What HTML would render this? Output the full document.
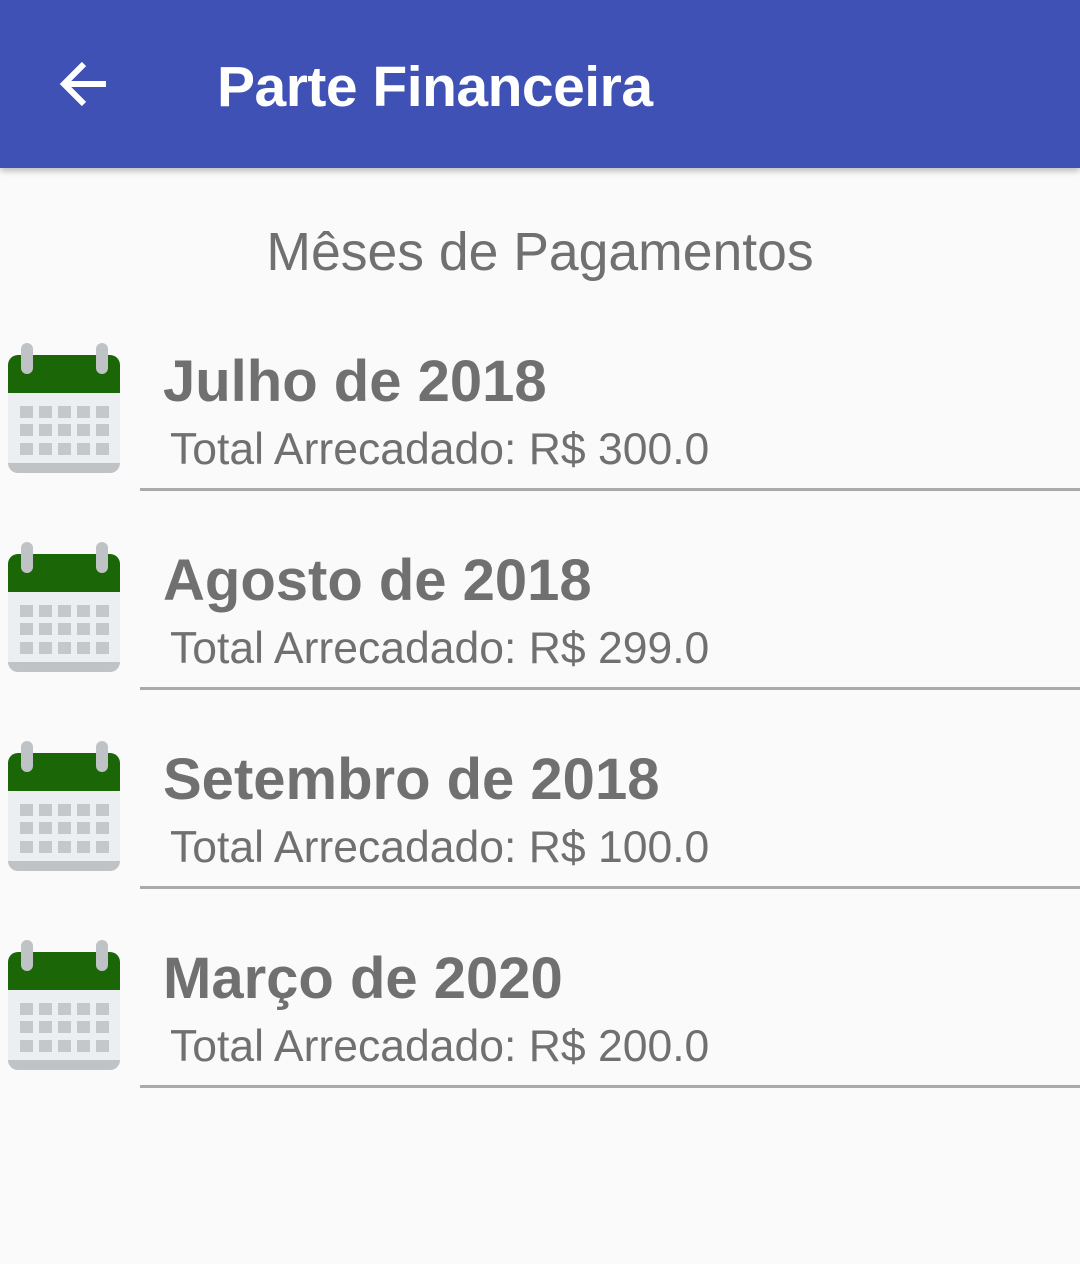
<!DOCTYPE html>
<html><head><meta charset="utf-8"><style>
body{margin:0;width:1080px;height:1264px;background:#fafafa;font-family:"Liberation Sans",Roboto,sans-serif;position:relative;overflow:hidden}
.bar{position:absolute;left:0;top:0;width:1080px;height:168px;background:#3f51b5;box-shadow:0 3px 6px rgba(0,0,0,.25)}
.bar .t{position:absolute;left:217px;top:54px;font-size:57px;color:#fff;font-weight:bold;letter-spacing:-0.5px}
.sub{position:absolute;top:222px;left:0;width:1080px;text-align:center;font-size:53.5px;color:#707070}
.row{position:absolute;left:0;width:1080px;height:199px}
.row svg{position:absolute;left:8px;top:13px}
.m{position:absolute;left:163px;top:18px;font-size:58px;font-weight:bold;color:#707070}
.v{position:absolute;left:170px;top:95px;font-size:44.5px;color:#707070}
.ln{position:absolute;left:140px;top:158px;width:940px;height:3px;background:#aaa}
</style></head><body>
<div class="bar">
<svg style="position:absolute;left:58px;top:58px" width="52" height="52" viewBox="0 0 52 52"><path d="M48 26H8M26 6L6 26l20 20" fill="none" stroke="#fff" stroke-width="6"/></svg>
<div class="t">Parte Financeira</div></div>
<div class="sub">Mêses de Pagamentos</div>

<div class="row" style="top:330px">
<svg width="112" height="132" viewBox="0 0 112 132"><path d="M0 108h112v12a10 10 0 0 1-10 10H10A10 10 0 0 1 0 120z" fill="#c0c3c6"/><rect x="0" y="48" width="112" height="72" fill="#eceff1"/><path d="M0 22a10 10 0 0 1 10-10h92a10 10 0 0 1 10 10v28H0z" fill="#1b6606"/><g fill="#c0c3c6"><rect x="13" y="0" width="12" height="31" rx="6"/><rect x="88" y="0" width="12" height="31" rx="6"/></g><g fill="#c5c8cb"><rect x="12" y="63" width="13" height="12"/><rect x="31" y="63" width="13" height="12"/><rect x="50" y="63" width="13" height="12"/><rect x="69" y="63" width="13" height="12"/><rect x="88" y="63" width="13" height="12"/><rect x="12" y="81" width="13" height="12"/><rect x="31" y="81" width="13" height="12"/><rect x="50" y="81" width="13" height="12"/><rect x="69" y="81" width="13" height="12"/><rect x="88" y="81" width="13" height="12"/><rect x="12" y="100" width="13" height="12"/><rect x="31" y="100" width="13" height="12"/><rect x="50" y="100" width="13" height="12"/><rect x="69" y="100" width="13" height="12"/><rect x="88" y="100" width="13" height="12"/></g></svg>
<div class="m">Julho de 2018</div><div class="v">Total Arrecadado: R$ 300.0</div><div class="ln"></div></div>

<div class="row" style="top:529px">
<svg width="112" height="132" viewBox="0 0 112 132"><path d="M0 108h112v12a10 10 0 0 1-10 10H10A10 10 0 0 1 0 120z" fill="#c0c3c6"/><rect x="0" y="48" width="112" height="72" fill="#eceff1"/><path d="M0 22a10 10 0 0 1 10-10h92a10 10 0 0 1 10 10v28H0z" fill="#1b6606"/><g fill="#c0c3c6"><rect x="13" y="0" width="12" height="31" rx="6"/><rect x="88" y="0" width="12" height="31" rx="6"/></g><g fill="#c5c8cb"><rect x="12" y="63" width="13" height="12"/><rect x="31" y="63" width="13" height="12"/><rect x="50" y="63" width="13" height="12"/><rect x="69" y="63" width="13" height="12"/><rect x="88" y="63" width="13" height="12"/><rect x="12" y="81" width="13" height="12"/><rect x="31" y="81" width="13" height="12"/><rect x="50" y="81" width="13" height="12"/><rect x="69" y="81" width="13" height="12"/><rect x="88" y="81" width="13" height="12"/><rect x="12" y="100" width="13" height="12"/><rect x="31" y="100" width="13" height="12"/><rect x="50" y="100" width="13" height="12"/><rect x="69" y="100" width="13" height="12"/><rect x="88" y="100" width="13" height="12"/></g></svg>
<div class="m">Agosto de 2018</div><div class="v">Total Arrecadado: R$ 299.0</div><div class="ln"></div></div>

<div class="row" style="top:728px">
<svg width="112" height="132" viewBox="0 0 112 132"><path d="M0 108h112v12a10 10 0 0 1-10 10H10A10 10 0 0 1 0 120z" fill="#c0c3c6"/><rect x="0" y="48" width="112" height="72" fill="#eceff1"/><path d="M0 22a10 10 0 0 1 10-10h92a10 10 0 0 1 10 10v28H0z" fill="#1b6606"/><g fill="#c0c3c6"><rect x="13" y="0" width="12" height="31" rx="6"/><rect x="88" y="0" width="12" height="31" rx="6"/></g><g fill="#c5c8cb"><rect x="12" y="63" width="13" height="12"/><rect x="31" y="63" width="13" height="12"/><rect x="50" y="63" width="13" height="12"/><rect x="69" y="63" width="13" height="12"/><rect x="88" y="63" width="13" height="12"/><rect x="12" y="81" width="13" height="12"/><rect x="31" y="81" width="13" height="12"/><rect x="50" y="81" width="13" height="12"/><rect x="69" y="81" width="13" height="12"/><rect x="88" y="81" width="13" height="12"/><rect x="12" y="100" width="13" height="12"/><rect x="31" y="100" width="13" height="12"/><rect x="50" y="100" width="13" height="12"/><rect x="69" y="100" width="13" height="12"/><rect x="88" y="100" width="13" height="12"/></g></svg>
<div class="m">Setembro de 2018</div><div class="v">Total Arrecadado: R$ 100.0</div><div class="ln"></div></div>

<div class="row" style="top:927px">
<svg width="112" height="132" viewBox="0 0 112 132"><path d="M0 108h112v12a10 10 0 0 1-10 10H10A10 10 0 0 1 0 120z" fill="#c0c3c6"/><rect x="0" y="48" width="112" height="72" fill="#eceff1"/><path d="M0 22a10 10 0 0 1 10-10h92a10 10 0 0 1 10 10v28H0z" fill="#1b6606"/><g fill="#c0c3c6"><rect x="13" y="0" width="12" height="31" rx="6"/><rect x="88" y="0" width="12" height="31" rx="6"/></g><g fill="#c5c8cb"><rect x="12" y="63" width="13" height="12"/><rect x="31" y="63" width="13" height="12"/><rect x="50" y="63" width="13" height="12"/><rect x="69" y="63" width="13" height="12"/><rect x="88" y="63" width="13" height="12"/><rect x="12" y="81" width="13" height="12"/><rect x="31" y="81" width="13" height="12"/><rect x="50" y="81" width="13" height="12"/><rect x="69" y="81" width="13" height="12"/><rect x="88" y="81" width="13" height="12"/><rect x="12" y="100" width="13" height="12"/><rect x="31" y="100" width="13" height="12"/><rect x="50" y="100" width="13" height="12"/><rect x="69" y="100" width="13" height="12"/><rect x="88" y="100" width="13" height="12"/></g></svg>
<div class="m">Março de 2020</div><div class="v">Total Arrecadado: R$ 200.0</div><div class="ln"></div></div>
</body></html>
